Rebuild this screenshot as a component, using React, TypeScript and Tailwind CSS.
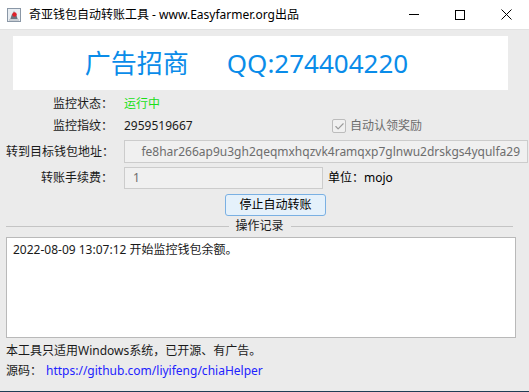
import { Check } from "lucide-react";

const address = "fe8har266ap9u3gh2qeqmxhqzvk4ramqxp7glnwu2drskgs4yqulfa29";

// 窗口标题栏图标
const AppIcon = () => (
    <svg width="14" height="14" viewBox="0 0 14 14">
        <rect x="0.5" y="0.5" width="13" height="13" fill="#e8edf2" stroke="#8a97a6" />
        <path d="M3 12 L5 6 L9 6 L11 12 Z" fill="#6b7480" />
        <path d="M5.5 6 L7 2.5 L8.5 6 Z" fill="#9aa3ad" />
        <circle cx="7.5" cy="6.5" r="2.2" fill="#e0202a" />
        <rect x="2" y="11" width="10" height="2" fill="#c9ced4" />
    </svg>
);

const Row = ({ label, children, className = "" }: { label: string; children: React.ReactNode; className?: string }) => (
    <div className={"flex items-center " + className}>
        <div className="w-[107px] text-right whitespace-nowrap">{label}</div>
        <div className="ml-[11px] flex items-center flex-1">{children}</div>
    </div>
);

export default function App() {
    return (
        <div
            className="w-[529px] h-[392px] bg-[#ebebeb] flex flex-col text-[12px] text-[#1a1a1a] overflow-hidden"
            style={{ fontFamily: '"Noto Sans", "Noto Sans CJK SC", sans-serif' }}
        >
            {/* 标题栏 */}
            <div className="h-[30px] bg-white border-b border-[#e2e2e2] flex items-center shrink-0">
                <div className="ml-[7px] mt-[1px]"><AppIcon /></div>
                <div className="ml-[8px] text-black">奇亚钱包自动转账工具 - www.Easyfarmer.org出品</div>
                <div className="ml-auto flex items-center h-full">
                    <div className="w-[46px] h-full flex items-center justify-center">
                        <div className="w-[10px] h-px bg-black" />
                    </div>
                    <div className="w-[46px] h-full flex items-center justify-center">
                        <div className="w-[10px] h-[10px] border border-black" />
                    </div>
                    <div className="w-[46px] h-full flex items-center justify-center">
                        <svg width="11" height="11" viewBox="0 0 11 11">
                            <path d="M0.5 0.5 L10.5 10.5 M10.5 0.5 L0.5 10.5" stroke="#000" strokeWidth="1" />
                        </svg>
                    </div>
                </div>
            </div>

            {/* 广告 */}
            <div className="mt-[6px] mx-[13px] w-[495px] h-[54px] bg-white flex items-center justify-center shrink-0">
                <div className="flex items-center text-[#0a8ce9] text-[26px] leading-none mr-[28px]">
                    <span>广告招商</span>
                    <span className="ml-[38px]">QQ:274404220</span>
                </div>
            </div>

            <div className="flex flex-col px-[6px] mt-[3px]">
                <Row label="监控状态：" className="h-[22px]">
                    <span className="text-[#19e019]">运行中</span>
                </Row>
                <Row label="监控指纹：" className="h-[22px]">
                    <span className="w-[208px]">2959519667</span>
                    <span className="w-[14px] h-[14px] border border-[#bcbcbc] bg-[#f0f0f0] rounded-[2px] flex items-center justify-center">
                        <Check size={11} strokeWidth={2.5} className="text-[#9a9a9a]" />
                    </span>
                    <span className="ml-[4px] text-[#6d6d6d]">自动认领奖励</span>
                </Row>
                <Row label="转到目标钱包地址：" className="h-[23px] mt-[3px]">
                    <div className="w-[404px] h-[23px] border border-[#cccccc] bg-[#f0f0f0] flex items-center justify-end overflow-hidden pr-[7px] text-[#6d6d6d] whitespace-nowrap">
                        {address}
                    </div>
                </Row>
                <Row label="转账手续费：" className="h-[22px] mt-[4px]">
                    <div className="w-[199px] h-[22px] border border-[#cccccc] bg-[#f0f0f0] flex items-center pl-[8px] text-[#6d6d6d]">1</div>
                    <span className="ml-[5px] text-black">单位：mojo</span>
                </Row>

                <div className="flex justify-center mt-[5px] pl-[22px]">
                    <button className="w-[101px] h-[22px] bg-[#e5f1fb] border border-[#7ab0e3] rounded-[3px] text-black flex items-center justify-center">
                        停止自动转账
                    </button>
                </div>

                <div className="flex items-center h-[18px] mt-[1px]">
                    <div className="flex-1 h-px bg-[#c4c4c4]" />
                    <span className="px-[7px]">操作记录</span>
                    <div className="flex-1 h-px bg-[#c4c4c4] mr-[10px]" />
                </div>

                <div className="mt-[2px] w-[510px] h-[101px] bg-white border border-[#b9b9b9] px-[6px] pt-[3px]">
                    2022-08-09 13:07:12 开始监控钱包余额。
                </div>

                <div className="h-[20px] mt-[3px] flex items-center">本工具只适用Windows系统，已开源、有广告。</div>
                <div className="h-[20px] flex items-center">
                    <span>源码：</span>
                    <span className="ml-[4px] text-[#2222ff]">https://github.com/liyifeng/chiaHelper</span>
                </div>
            </div>
            <div className="mt-auto h-px bg-[#1f3d55] shrink-0" />
        </div>
    );
}
